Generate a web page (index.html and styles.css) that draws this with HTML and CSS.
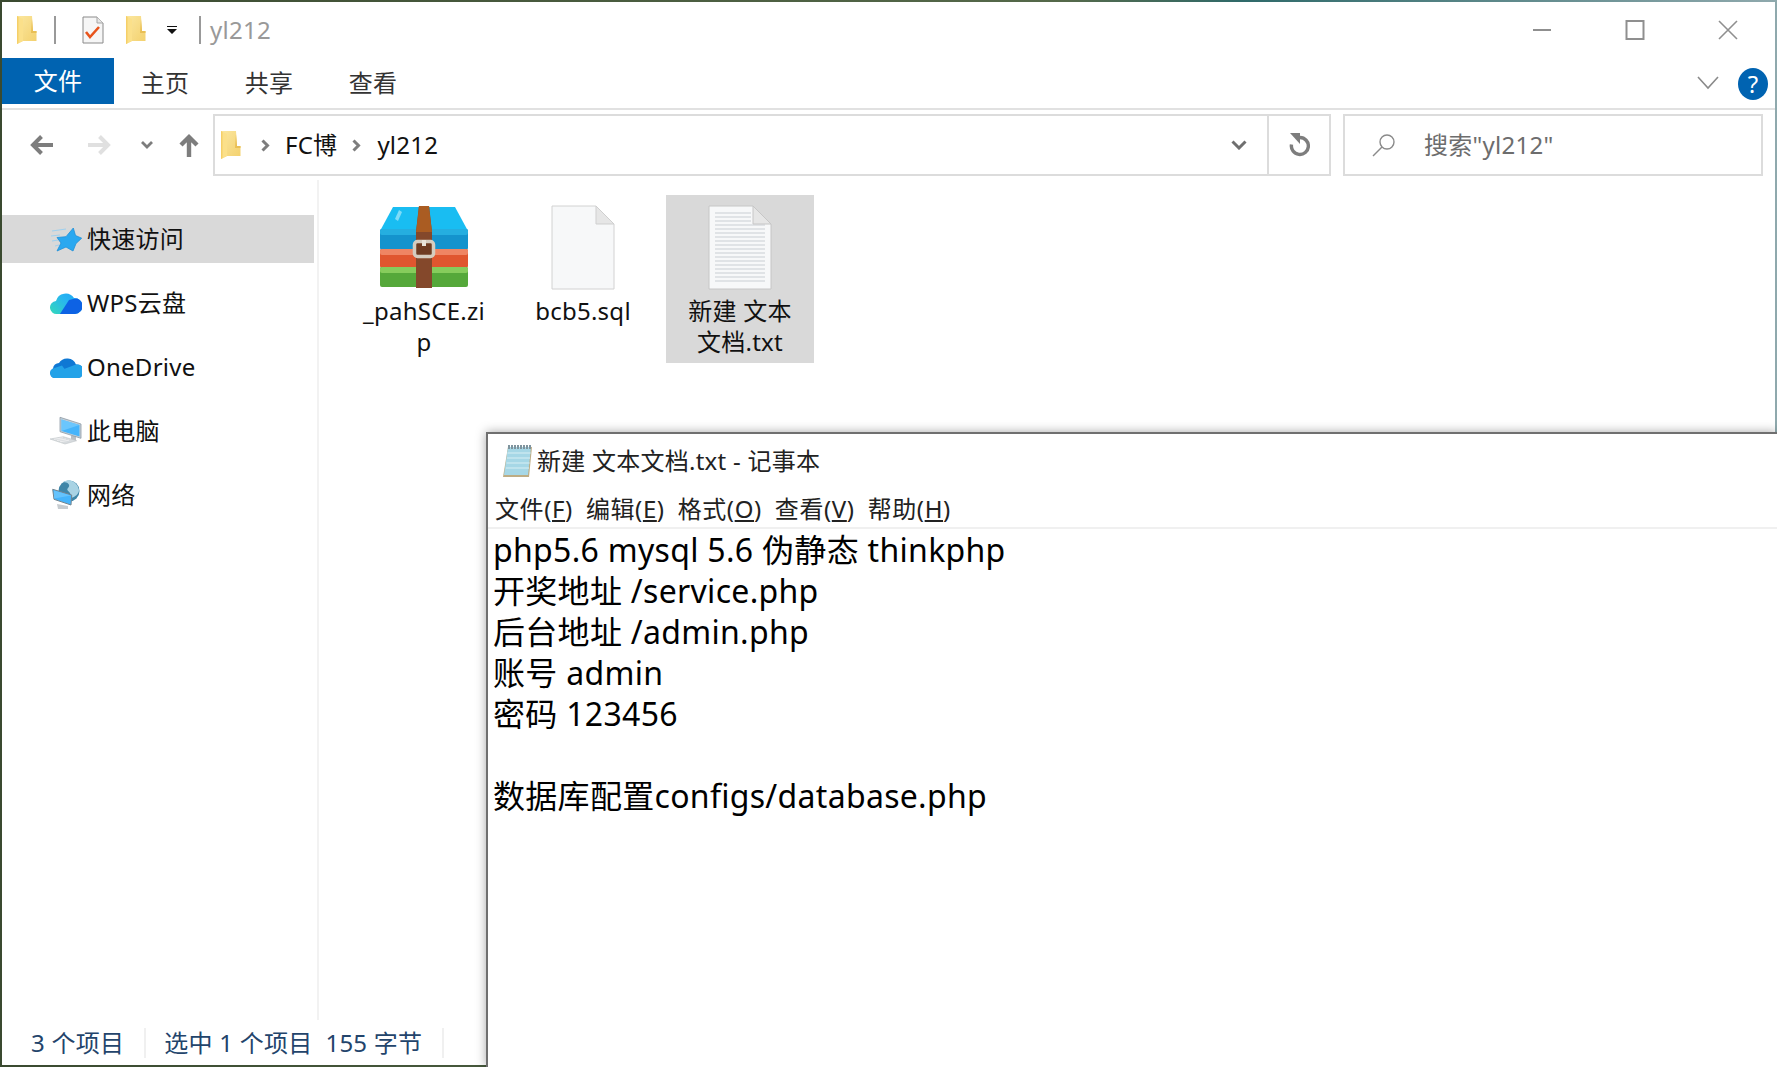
FILE: index.html
```html
<!DOCTYPE html>
<html lang="zh-CN">
<head>
  <meta charset="UTF-8" />
  <title>yl212</title>
  <link rel="stylesheet" href="styles.css">
</head>
<body>
  <svg class="defs" width="0" height="0">
    <defs>
      <linearGradient id="folderFill" x1="0" y1="0" x2="1" y2="1">
        <stop offset="0" stop-color="#fbe7a0" />
        <stop offset="1" stop-color="#f3d06c" />
      </linearGradient>
      <symbol id="folder" viewBox="0 0 20 28">
        <path d="M0 0h15l1 15h3.500v10H6l-6 3z" fill="url(#folderFill)" />
        <path d="M15 3l1 12h3.500v2H14z" fill="#e9bf55" />
        <path d="M0 0l6 3v22l-6 3z" fill="#fbe08a" />
        <path d="M0 0v28l1.500-1V1z" fill="#f5cf68" />
      </symbol>
    </defs>
  </svg>

  <div class="desktop">
    <div class="explorer">
      <div class="titlebar">
        <svg class="qa-folder"><use href="#folder" /></svg>
        <span class="qa-sep"></span>
        <svg class="qa-check" viewBox="0 0 22 28">
          <path d="M1 1h14l6 6v20H1z" fill="#f6f6f6" stroke="#8a8a8a" stroke-width="1" />
          <path d="M15 1v6h6" fill="#e6e6e6" stroke="#a5a5a5" stroke-width="1" />
          <path d="M4 16l4 5 9-10" fill="none" stroke="#e8541c" stroke-width="2.600" />
        </svg>
        <svg class="qa-folder2"><use href="#folder" /></svg>
        <svg class="qa-drop" viewBox="0 0 12 9"><path d="M1 0h10v1H1zM1 3h10L6 8z" fill="#111" /></svg>
        <span class="qa-sep"></span>
        <span class="title-text">yl212</span>
        <div class="win-btns">
          <svg viewBox="0 0 20 20"><path d="M1 10h18" stroke="#8f8f8f" stroke-width="2" /></svg>
          <svg viewBox="0 0 20 20"><path d="M1.500 1h17v18h-17z" fill="none" stroke="#8f8f8f" stroke-width="2" /></svg>
          <svg viewBox="0 0 20 20"><path d="M1 1l18 18M19 1L1 19" stroke="#8f8f8f" stroke-width="1.600" /></svg>
        </div>
      </div>

      <div class="ribbon">
        <div class="tab tab-file">文件</div>
        <div class="tab">主页</div>
        <div class="tab">共享</div>
        <div class="tab">查看</div>
        <svg class="ribbon-chevron" viewBox="0 0 22 14"><path d="M1 1l10 11L21 1" fill="none" stroke="#8a8a8a" stroke-width="1.600" /></svg>
        <div class="help">?</div>
      </div>

      <div class="navbar">
        <svg class="nav-icon nav-back" viewBox="0 0 24 20"><path d="M23 10H4M11.500 1.500L3 10l8.500 8.500" fill="none" stroke="#7d7d7d" stroke-width="4" /></svg>
        <svg class="nav-icon nav-forward" viewBox="0 0 24 20"><path d="M1 10h19M12.500 1.500L21 10l-8.500 8.500" fill="none" stroke="#e0e0e0" stroke-width="4" /></svg>
        <svg class="nav-icon nav-recent" viewBox="0 0 12 8"><path d="M1 1l5 5 5-5" fill="none" stroke="#7d7d7d" stroke-width="2.800" /></svg>
        <svg class="nav-icon nav-up" viewBox="0 0 20 24"><path d="M10 24V4M2 12l8-8 8 8" fill="none" stroke="#7d7d7d" stroke-width="4.400" /></svg>
        <div class="address">
          <svg class="addr-folder"><use href="#folder" /></svg>
          <svg class="crumb-arrow" viewBox="0 0 9 13"><path d="M1.500 1.500l5 5-5 5" fill="none" stroke="#7d7d7d" stroke-width="3" /></svg>
          <span class="crumb">FC博</span>
          <svg class="crumb-arrow" viewBox="0 0 9 13"><path d="M1.500 1.500l5 5-5 5" fill="none" stroke="#7d7d7d" stroke-width="3" /></svg>
          <span class="crumb">yl212</span>
          <svg class="addr-drop" viewBox="0 0 16 10"><path d="M1.500 1.500L8 8l6.500-6.500" fill="none" stroke="#6f6f6f" stroke-width="3" /></svg>
          <div class="addr-refresh">
            <svg viewBox="0 0 22 24">
              <path d="M12 4.500a8.500 8.500 0 1 1-8.500 7" fill="none" stroke="#7d7d7d" stroke-width="3.400" />
              <path d="M2 0h10v11z" fill="#7d7d7d" />
            </svg>
          </div>
        </div>
        <div class="search">
          <svg viewBox="0 0 24 24"><circle cx="15" cy="9" r="7" fill="none" stroke="#8a8a8a" stroke-width="1.400" /><path d="M10 14L1 23" stroke="#8a8a8a" stroke-width="1.400" /></svg>
          <span>搜索"yl212"</span>
        </div>
      </div>

      <div class="main">
        <nav class="sidebar">
          <div class="side-row active">
            <svg class="side-icon" viewBox="0 0 32 32">
              <path d="M2 8l14-2M1 13l9-1M2 18l6-1M5 23l4-1" stroke="#9fd0ee" stroke-width="1" />
              <path d="M23.300 5l2.200 7.500 6.200 2.700-5.700 5.300L23 28l-7-4-9 4 4-8-4-5.500 9-.8z" fill="#2aa8f0" stroke="#1f8fd8" stroke-width=".8" />
            </svg>
            <span>快速访问</span>
          </div>
          <div class="side-row">
            <svg class="side-icon" viewBox="0 0 32 32">
              <defs>
                <linearGradient id="wpsA" x1="0" y1="1" x2="1" y2="0"><stop offset="0" stop-color="#36e0b0" /><stop offset=".55" stop-color="#27b4f2" /><stop offset="1" stop-color="#1a9ff5" /></linearGradient>
                <clipPath id="wpsClip"><path d="M7 27a6.500 6.500 0 0 1-1-13 10 10 0 0 1 18-3 8 8 0 0 1 1 16z" /></clipPath>
              </defs>
              <g clip-path="url(#wpsClip)">
                <rect x="0" y="0" width="32" height="32" fill="url(#wpsA)" />
                <path d="M19 13l13-3v20H8z" fill="#0d62e4" />
              </g>
            </svg>
            <span>WPS云盘</span>
          </div>
          <div class="side-row">
            <svg class="side-icon" viewBox="0 0 32 32">
              <path d="M5 27a5 5 0 0 1-2-9.500 6 6 0 0 1 6-5.500 9.500 9.500 0 0 1 17 1.500 6.800 6.800 0 0 1 2 13.500z" fill="#0f78d4" />
              <path d="M5 27a5 5 0 0 1-2-9.500l9-3 9 12.500zM14 18l12-4.500a6.800 6.800 0 0 1 2 13.500H20z" fill="#23a2e8" />
            </svg>
            <span>OneDrive</span>
          </div>
          <div class="side-row">
            <svg class="side-icon" viewBox="0 0 32 32">
              <path d="M26 21v5l-5-.5v-5z" fill="#b9bfc4" />
              <path d="M10 2.300l21 6.700v14.300L10 16.700z" fill="#c5d0d8" stroke="#8d9ba6" stroke-width=".8" />
              <path d="M11.500 4.500l18 5.500v11.500l-18-5.500z" fill="#45b4fb" />
              <path d="M11.500 4.500l18 5.500-18 6z" fill="#7ccdfd" opacity=".7" />
              <path d="M0 24l13.300-2.300L26.700 25.700 15 29z" fill="#d7dbde" stroke="#bfc4c8" stroke-width=".6" />
              <path d="M4 24.300l9-1.500M7 25.500l9-1.500M10 26.800l9-1.600" stroke="#f2f3f4" stroke-width=".8" />
            </svg>
            <span>此电脑</span>
          </div>
          <div class="side-row">
            <svg class="side-icon" viewBox="0 0 32 32">
              <circle cx="19" cy="12" r="10.500" fill="#3f86a8" />
              <path d="M13 3c5 0 8 3 5 6s4 3 3 10c4-1 8-4 8-8-1-5-4-8-8-9.500-3-.5-5 0-8 1.500z" fill="#a9d3e4" />
              <path d="M2.700 10.300L21.700 16 21 26 4 20.300z" fill="#45b4fb" stroke="#74848e" stroke-width="1" />
              <path d="M4 11.500l17 5-17 3z" fill="#7ccdfd" opacity=".6" />
              <path d="M7 25l11 2v3H8z" fill="#c7ccd0" />
            </svg>
            <span>网络</span>
          </div>
        </nav>

        <section class="files">
          <div class="file">
            <svg class="file-icon" viewBox="0 0 90 90">
              <path d="M14 2h62l13 24H1z" fill="#19bdf2" />
              <path d="M16 14l4-9 3 2-4 9z" fill="#7fdcf8" />
              <rect x="1" y="24" width="88" height="21" rx="2" fill="#1493cd" />
              <rect x="1" y="24" width="88" height="6" rx="2" fill="#25aee0" />
              <rect x="1" y="44" width="88" height="19" rx="2" fill="#e0562f" />
              <rect x="1" y="44" width="88" height="6" rx="2" fill="#ef8563" />
              <rect x="1" y="62" width="88" height="20" rx="2" fill="#55a83a" />
              <rect x="1" y="62" width="88" height="6" rx="2" fill="#86cc5c" />
              <path d="M40 1h10l3 26v56H37V27z" fill="#84482b" />
              <path d="M40 1h10l3 26H37z" fill="#aa5c22" />
              <rect x="35.500" y="36.500" width="19" height="15" rx="3" fill="#6e3c22" stroke="#d5cdc0" stroke-width="3.500" />
              <path d="M43 35h4v6h-4z" fill="#e9e4da" />
            </svg>
            <span class="file-name">_pahSCE.zi<br />p</span>
          </div>
          <div class="file">
            <svg class="file-icon" viewBox="0 0 90 90">
              <path d="M14 1h44l18 18v65H14z" fill="#f7f8f9" stroke="#d2d2d2" stroke-width="1" />
              <path d="M58 1v18h18z" fill="#e6e6e6" stroke="#cfcfcf" stroke-width="1" />
            </svg>
            <span class="file-name">bcb5.sql</span>
          </div>
          <div class="file selected">
            <svg class="file-icon" viewBox="0 0 90 90">
              <path d="M14 1h44l18 18v65H14z" fill="#f7f8f9" stroke="#c6c6c6" stroke-width="1" />
              <path d="M20 8h36M20 12h36M20 16h36M20 20h50M20 24h50M20 28h50M20 32h50M20 36h50M20 40h50M20 44h50M20 48h50M20 52h50M20 56h50M20 60h50M20 64h50M20 68h50M20 72h50M20 76h50" stroke="#d9dcdf" stroke-width="1.300" />
              <path d="M58 1v18h18z" fill="#e6e6e6" stroke="#c6c6c6" stroke-width="1" />
            </svg>
            <span class="file-name">新建 文本<br />文档.txt</span>
          </div>
        </section>
      </div>

      <div class="statusbar">
        <span class="stat stat-count">3 个项目</span>
        <span class="stat stat-sel">选中 1 个项目&nbsp;&nbsp;155 字节</span>
      </div>
    </div>

    <div class="notepad">
      <div class="np-title">
        <svg class="np-icon" viewBox="0 0 32 34">
          <path d="M7 3h24l-3 30H2z" fill="#bdac84" />
          <path d="M7 3h23l-3 28H3z" fill="#a6d7e6" />
          <path d="M6.500 9h23M6 14h23M5.500 19h23M5 24h23" stroke="#c7e7f0" stroke-width="1.500" />
          <path d="M7 3h23" stroke="#7f949e" stroke-width="4" stroke-dasharray="2 1" />
        </svg>
        <span>新建 文本文档.txt - 记事本</span>
      </div>
      <div class="np-menu">
        <span>文件(<u>F</u>)</span>
        <span>编辑(<u>E</u>)</span>
        <span>格式(<u>O</u>)</span>
        <span>查看(<u>V</u>)</span>
        <span>帮助(<u>H</u>)</span>
      </div>
      <pre class="np-text">php5.6 mysql 5.6 伪静态 thinkphp
开奖地址 /service.php
后台地址 /admin.php
账号 admin
密码 123456

数据库配置configs/database.php</pre>
    </div>
  </div>
</body>
</html>
```

FILE: styles.css
```css
* {
  box-sizing: border-box;
}
html, body {
  margin: 0;
  padding: 0;
  overflow: hidden;
}
body {
  font-family: "Noto Sans", "Noto Sans CJK SC", sans-serif;
  color: #111;
  letter-spacing: 0.25px;
}
.defs {
  position: absolute;
}
.desktop {
  position: relative;
  width: 1777px;
  height: 1067px;
  padding: 2px 2px 2px 2px;
  background: linear-gradient(90deg, #3a4a30 0%, #55694a 60%, #2f6a6a 70%, #8fa9ad 100%);
}
.explorer {
  display: flex;
  flex-direction: column;
  height: 100%;
  background: white;
}

/* title bar */
.titlebar {
  display: flex;
  align-items: center;
  height: 56px;
  padding: 0 0 0 15px;
  flex-shrink: 0;
}
.qa-folder {
  width: 20px;
  height: 28px;
}
.qa-sep {
  width: 2px;
  height: 28px;
  background: #999;
  margin-left: 17px;
}
.qa-check {
  width: 22px;
  height: 28px;
  margin-left: 26px;
}
.qa-folder2 {
  width: 20px;
  height: 28px;
  margin-left: 22px;
}
.qa-drop {
  width: 12px;
  height: 9px;
  margin-left: 20px;
}
.qa-drop + .qa-sep {
  margin-left: 21px;
}
.title-text {
  margin-left: 9px;
  font-size: 24px;
  color: #999;
  line-height: 30px;
}
.win-btns {
  display: flex;
  margin-left: auto;
  gap: 73px;
  padding-right: 37px;
}
.win-btns svg {
  width: 20px;
  height: 20px;
}

/* ribbon */
.ribbon {
  display: flex;
  align-items: stretch;
  height: 52px;
  border-bottom: 2px solid #e1e1e1;
  padding-bottom: 4px;
  flex-shrink: 0;
}
.tab {
  width: 104px;
  display: flex;
  justify-content: center;
  align-items: center;
  padding: 4px 2px 0 0;
  font-size: 24px;
  line-height: 30px;
  color: #333;
}
.tab-file {
  width: 112px;
  padding: 0;
  background: #0063b1;
  color: white;
}
.ribbon-chevron {
  width: 22px;
  height: 14px;
  margin: 18px 0 0 auto;
}
.help {
  width: 30px;
  height: 32px;
  margin: 10px 7px 0 19px;
  border-radius: 50%;
  background: #0063b1;
  color: white;
  font-size: 24px;
  line-height: 32px;
  text-align: center;
}

/* nav row */
.navbar {
  display: flex;
  align-items: center;
  height: 70px;
  flex-shrink: 0;
}
.nav-icon {
  flex-shrink: 0;
}
.nav-back {
  width: 24px;
  height: 20px;
  margin-left: 28px;
}
.nav-forward {
  width: 24px;
  height: 20px;
  margin-left: 33px;
}
.nav-recent {
  width: 12px;
  height: 8px;
  margin-left: 30px;
}
.nav-up {
  width: 20px;
  height: 24px;
  margin-left: 26px;
}
.address {
  display: flex;
  align-items: center;
  width: 1118px;
  height: 62px;
  margin-left: 14px;
  border: 2px solid #dcdcdc;
  padding-left: 6px;
}
.addr-folder {
  width: 20px;
  height: 28px;
}
.crumb-arrow {
  width: 9px;
  height: 13px;
  margin: 0 15px 0 20px;
}
.crumb {
  font-size: 24px;
  line-height: 30px;
  color: #111;
}
.crumb + .crumb-arrow {
  margin: 0 16px 0 15px;
}
.addr-drop {
  width: 16px;
  height: 10px;
  margin-left: auto;
  margin-right: 20px;
}
.addr-refresh {
  width: 62px;
  height: 58px;
  border-left: 2px solid #dcdcdc;
  display: flex;
  align-items: center;
  justify-content: center;
}
.addr-refresh svg {
  width: 22px;
  height: 24px;
}
.search {
  display: flex;
  align-items: center;
  width: 420px;
  height: 62px;
  margin-left: 12px;
  border: 2px solid #dcdcdc;
  padding-left: 27px;
  font-size: 24px;
  color: #6d6d6d;
}
.search svg {
  width: 24px;
  height: 24px;
}
.search span {
  margin-left: 28px;
  line-height: 30px;
}

/* main area */
.main {
  display: flex;
  flex: 1;
  min-height: 0;
}
.sidebar {
  width: 317px;
  padding-top: 35px;
  display: flex;
  flex-direction: column;
  gap: 16px;
  border-right: 2px solid #f2f2f2;
  flex-shrink: 0;
}
.side-row {
  display: flex;
  align-items: center;
  height: 48px;
  width: 312px;
  padding-left: 48px;
  font-size: 24px;
  line-height: 30px;
  color: #111;
}
.side-row.active {
  background: #d9d9d9;
}
.side-icon {
  width: 32px;
  height: 32px;
  margin-right: 5px;
}
.files {
  display: flex;
  align-items: flex-start;
  gap: 11px;
  padding: 15px 0 0 31px;
}
.file {
  display: flex;
  flex-direction: column;
  align-items: center;
  width: 148px;
  min-height: 168px;
  padding-top: 10px;
}
.file:nth-child(2) {
  margin-right: -2px;
}
.file.selected {
  background: #d9d9d9;
}
.file-icon {
  width: 90px;
  height: 90px;
}
.file-name {
  font-size: 24px;
  line-height: 31px;
  text-align: center;
  color: #111;
}

/* status bar */
.statusbar {
  display: flex;
  align-items: center;
  height: 45px;
  flex-shrink: 0;
  font-size: 24px;
  line-height: 30px;
  color: #23446b;
}
.stat {
  border-right: 2px solid #f0f0f0;
  white-space: nowrap;
}
.stat-count {
  padding: 0 20px 0 29px;
}
.stat-sel {
  padding: 0 20px 0 18px;
}

/* notepad sits over the explorer window */
.notepad {
  position: absolute;
  left: 486px;
  top: 432px;
  right: 0;
  bottom: 0;
  background: white;
  border-top: 2px solid #6f6f6f;
  border-left: 2px solid #6f6f6f;
  box-shadow: 0 0 10px rgba(0, 0, 0, 0.35);
  display: flex;
  flex-direction: column;
}
.np-title {
  display: flex;
  align-items: center;
  height: 53px;
  padding-left: 13px;
  font-size: 24px;
  line-height: 30px;
  color: #222;
}
.np-icon {
  width: 32px;
  height: 34px;
  margin-right: 4px;
}
.np-menu {
  display: flex;
  gap: 13px;
  height: 42px;
  padding: 6px 0 0 7px;
  font-size: 24px;
  letter-spacing: 0.6px;
  line-height: 32px;
  color: #222;
  border-bottom: 2px solid #f0f0f0;
}
.np-text {
  margin: 0;
  padding: 0 0 0 5px;
  font-family: "Noto Sans", "Noto Sans CJK SC", sans-serif;
  font-size: 32px;
  letter-spacing: 0.3px;
  line-height: 41px;
  color: #000;
}
```
